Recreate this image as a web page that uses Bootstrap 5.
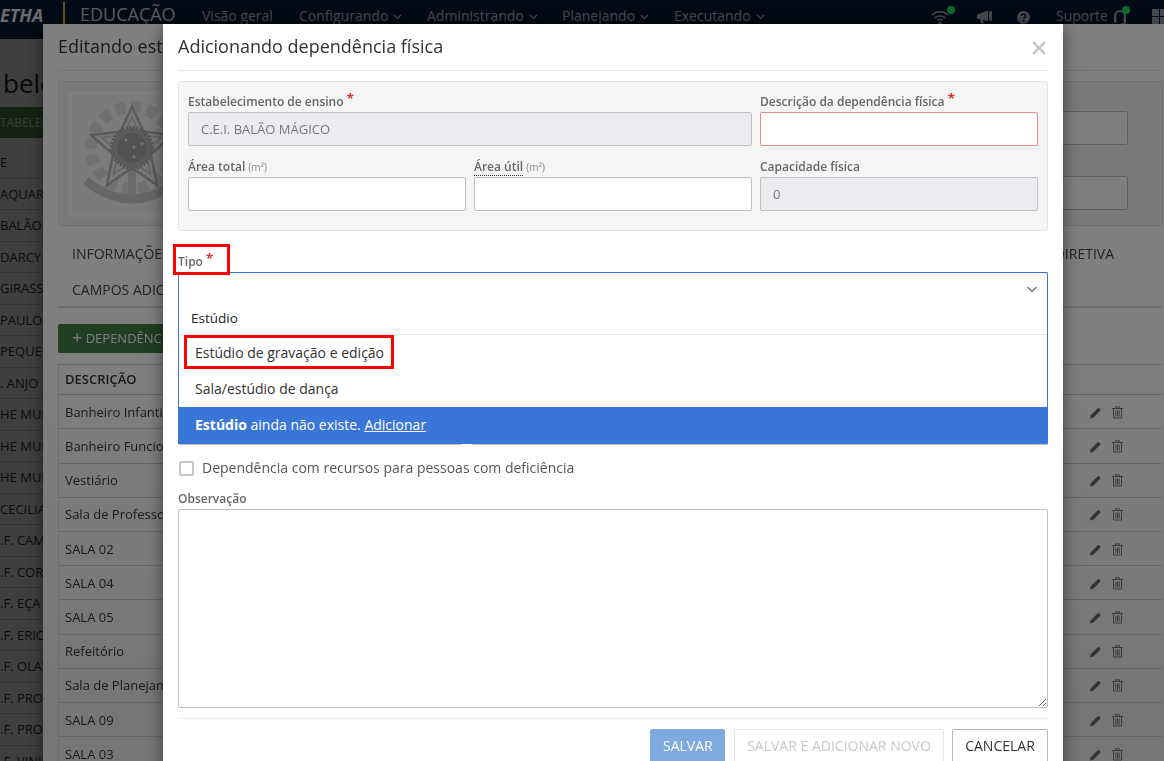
<!DOCTYPE html>
<html lang="pt-BR">
<head>
<meta charset="utf-8">
<title>Adicionando dependência física</title>
<link href="https://cdn.jsdelivr.net/npm/bootstrap@5.3.0/dist/css/bootstrap.min.css" rel="stylesheet">
<style>
html,body{height:761px;overflow:hidden;background:#fff}
body{font-family:"Open Sans","Liberation Sans",sans-serif;font-size:13px;line-height:1.4;color:#333;position:relative;width:1164px}
/* base page */
.topbar{position:relative;z-index:1055;height:39px;overflow:hidden;background:#061630;color:#8d96a2;font-size:14px;white-space:nowrap}
.topbar>*{flex:none}
.brand-txt{font-weight:700;font-style:italic;font-size:18px;color:#d0d6dc;width:63px;line-height:30px}
.brand-sep{width:2px;height:36px;background:#d8a830;margin-top:2px}
.brand-app{font-size:18px;margin-left:15px;width:122px;line-height:28px;color:#b5bbc2}
.top-item{position:relative;line-height:32px;color:#8d96a2}
.top-item svg{vertical-align:1px;margin-left:5px}
.i1{width:97px}.i2{width:128px}.i3{width:135px}.i4{width:112px}.i5{width:257px}
.top-ico{line-height:32px}
.w-wifi{width:46px}.w-horn{width:40px}.w-help{width:39px}.w-sup{width:57px}.w-head{width:39px}.w-grid{width:20px}
.dot{position:absolute;width:8px;height:8px;border-radius:50%;background:#1cd65c;left:16px;top:6px}
.w-head .dot{left:9px}
.base-page{position:relative;height:722px;overflow:hidden}
.base-title{font-size:26px;line-height:36px;margin:26px 0 0 3px;color:#222}
.base-btn{background:#4d8f4d;color:#dfe;height:31px;line-height:31px;width:70px;font-size:12px;margin-top:6px;overflow:hidden}
.base-row{height:31.5px;line-height:31px;border-bottom:1px solid #ccc;white-space:nowrap;font-size:13px}
.base-list{margin-top:9px}
/* dim layers */
.dim-a,.dim-b{position:fixed;inset:0;width:auto;height:auto;background:#000;opacity:.5}
.dim-a{z-index:1050}
.dim-b{z-index:1070}
/* modal shells */
.shell{position:absolute;top:24px;height:760px;overflow:hidden;border:0;border-radius:0;background:#fff;box-shadow:0 5px 15px rgba(0,0,0,.5);padding:0 15px}
.shell-a{left:43px;width:1135px;z-index:1060;background:linear-gradient(#fff 320px,#eaecee 700px)}
.shell-b{left:163px;width:900px;z-index:1080}
.shell-head{height:47px;border-bottom:1px solid #e9e9e9;padding:0;align-items:center}
.shell-title{font-size:18px;line-height:44px;height:46px;font-weight:400;margin:0;color:#333;white-space:nowrap}
/* first modal */
.well-a{margin-top:10px;height:145px;background:#f5f5f5;border:1px solid #e3e3e3;border-radius:3px;padding:9px 34px 0 9px}
.crest-frame{width:220px;height:126px;background:#fff;padding:4px;flex:none}
.crest-in{height:118px;background:#f6f6f6}
.crest-in svg{display:block}
.a-input{display:block;height:34px;background:#fff;border:1px solid #bbb;border-radius:2px;width:100%}
.a-input+.a-input{margin-top:31px}
.a-fields{padding-top:20px;margin-left:auto;width:500px}
.tabs-a{font-size:14px;height:82px;border-bottom:2px solid #ddd;padding:10px 14px 0;align-content:flex-start;color:#444}
.tabs-a div{height:36px;line-height:36px;white-space:nowrap}
.tab-far{margin-left:auto;margin-right:35px}
.add-btn{margin-top:16px;background:#3f7d45;color:#fff;font-size:13px;height:29px;line-height:29px;padding:0 14px;border-radius:2px;width:180px;white-space:nowrap}
.add-btn b{font-weight:400;font-size:18px;line-height:1;vertical-align:-1px}
.tbl-a{margin:11px 0 0;--bs-table-bg:transparent;--bs-table-color:#333;border-top:1px solid #ccc;border-left:1px solid #ddd;font-size:13px}
.tbl-a td,.tbl-a th{padding:7.5px 6px;line-height:18.2px;border-bottom:1px solid #ccc;border-top:0;white-space:nowrap}
.tbl-a th{font-weight:600;padding-top:5px;padding-bottom:6px}
.tbl-a .acts{width:120px;text-align:left;padding-left:47px}
.acts svg{margin-right:11px;vertical-align:-2px}
/* second modal */
.well-b{margin-top:10px;height:150px;background:#f5f5f5;border:1px solid #e3e3e3;border-radius:3px;padding:11px 9px 0}
.fld-lbl{display:block;font-size:12px;line-height:17px;height:19px;font-weight:600;color:#666;white-space:nowrap;margin:0}
.fld-lbl small{font-size:10px;font-weight:400;color:#888}
.req{color:#d9302c;font-size:13px;line-height:10px;vertical-align:3px;font-weight:700}
.dotted{border-bottom:1px dotted #333}
.fld{display:block;height:34px;border:1px solid #c0c0c0;border-radius:2px;font-size:13px;padding:0 12px;color:#777;box-shadow:none;background:#fff;min-height:0}
.fld:disabled{background:#ebecef;color:#777;opacity:1}
.fld-bad{border-color:#ec8a8a}
.rowgap{margin-bottom:12px}
.tipo-wrap{position:relative;margin-top:22px}
.tipo-box{height:34px;border:1px solid #3a76d8;border-bottom:0;border-radius:2px 2px 0 0;position:relative;background:#fff}
.tipo-box svg{position:absolute;right:10px;top:13px}
.tipo-menu{position:absolute;z-index:3;left:0;right:0;top:52px;background:#fff;border-left:1px solid #3a76d8;border-right:1px solid #3a76d8;font-size:14px;color:#333}
.typed{height:30px;line-height:27px;padding-left:12px;border-bottom:1px solid #e8e8e8;color:#222;font-size:13.5px}
.opt{height:36px;line-height:36px;padding-left:16px;color:#333}
.opt-new{background:#3a76d8;color:#fff;height:37px;line-height:36px;padding-left:17px;margin:0 -1px}
.opt-new a{color:#fff}
.mark-box{position:absolute;z-index:5;border:3px solid #f00;pointer-events:none}
.mb-a{left:-5px;top:-9px;width:57px;height:31px}
.mb-b{left:5px;top:30px;width:210px;height:34px}
.under-row{margin-top:105px;gap:8px}
.under-row .fld{flex:1}
.under-row .fld:first-child{flex:0 0 285px}
.chk-row{margin-top:15px;height:16px;font-size:14px;color:#555;gap:8px}
.chk-box{width:15px;height:15px;border:2px solid #c6c6c6;border-radius:2px;margin:0 0 0 1px;flex:none;background:#fff}
.obs-lbl{margin-top:12px;height:21px;line-height:21px}
.obs{height:199px;border:1px solid #c0c0c0;border-radius:2px;box-shadow:none;resize:both;display:block;width:100%}
.foot{margin-top:10px;border-top:1px solid #eee;padding-top:10px;gap:8px}
.foot .btn{height:34px;padding:0 12px;border-radius:2px;font-size:14px;line-height:32px}
.btn-save{background:#7faadf;border:1px solid #7faadf;color:#fff;width:75px;margin-right:1px}
.btn-next{background:#fff;border:1px solid #e6e6e6;color:#c8c8c8;width:210px}
.btn-stop{background:#fff;border:1px solid #b5b5b5;color:#333;width:96px}
.shut{position:absolute;right:17px;top:17px;display:block}
</style>
</head>
<body>

<header class="topbar d-flex">
  <div class="brand-txt">ETHA</div>
  <div class="brand-sep"></div>
  <div class="brand-app">EDUCAÇÃO</div>
  <div class="top-item i1">Visão geral</div>
  <div class="top-item i2">Configurando<svg width="9" height="6" viewBox="0 0 9 6"><path d="M1 1l3.5 3.5L8 1" fill="none" stroke="currentColor" stroke-width="1.2"/></svg></div>
  <div class="top-item i3">Administrando<svg width="9" height="6" viewBox="0 0 9 6"><path d="M1 1l3.5 3.5L8 1" fill="none" stroke="currentColor" stroke-width="1.2"/></svg></div>
  <div class="top-item i4">Planejando<svg width="9" height="6" viewBox="0 0 9 6"><path d="M1 1l3.5 3.5L8 1" fill="none" stroke="currentColor" stroke-width="1.2"/></svg></div>
  <div class="top-item i5">Executando<svg width="9" height="6" viewBox="0 0 9 6"><path d="M1 1l3.5 3.5L8 1" fill="none" stroke="currentColor" stroke-width="1.2"/></svg></div>
  <div class="top-ico w-wifi position-relative" aria-label="Conexão">
    <svg width="18" height="14" viewBox="0 0 18 14" fill="none" stroke="currentColor" stroke-width="1.4"><path d="M1 5a11.500 11.500 0 0 1 16 0M3.800 8a7.500 7.500 0 0 1 10.400 0M6.500 10.600a3.600 3.600 0 0 1 5 0"/><circle cx="9" cy="13" r=".9" fill="currentColor"/></svg>
    <span class="dot"></span>
  </div>
  <div class="top-ico w-horn" aria-label="Avisos">
    <svg width="16" height="14" viewBox="0 0 16 14" fill="currentColor"><path d="M0 4.500l11-4v11l-5-1.500.8 3.500H3.800L3 9H0zM12 2l3-1.500v11L12 10z"/></svg>
  </div>
  <div class="top-ico w-help" aria-label="Ajuda">
    <svg width="13" height="13" viewBox="0 0 13 13"><circle cx="6.500" cy="6.500" r="6.500" fill="currentColor"/><path d="M4.500 5a2 2 0 1 1 3 1.700c-.7.400-1 .7-1 1.500" fill="none" stroke="#061630" stroke-width="1.500"/><rect x="5.700" y="9.200" width="1.600" height="1.600" fill="#061630"/></svg>
  </div>
  <div class="top-item w-sup">Suporte</div>
  <div class="top-ico w-head position-relative" aria-label="Headset">
    <svg width="14" height="17" viewBox="0 0 14 17" fill="none" stroke="currentColor" stroke-width="2"><path d="M2 9V7a5 5 0 0 1 10 0v2"/><rect x="1" y="8.500" width="2.500" height="5" fill="currentColor" stroke="none"/><rect x="10.500" y="8.500" width="2.500" height="5" fill="currentColor" stroke="none"/><path d="M12 13v2H8" stroke-width="1.500"/></svg>
    <span class="dot"></span>
  </div>
  <div class="top-ico w-grid" aria-label="Menu">
    <svg width="16" height="16" viewBox="0 0 16 16" fill="currentColor"><rect width="7" height="7"/><rect x="8" width="7" height="7"/><rect y="8" width="7" height="7"/><rect x="8" y="8" width="7" height="7"/></svg>
  </div>
</header>

<main class="base-page">
  <div class="base-title">belecimentos</div>
  <div class="base-btn">TABELECIMENTO</div>
  <div class="base-list">
    <div class="base-row">E</div>
    <div class="base-row">AQUARELA</div>
    <div class="base-row">BALÃO MÁGICO</div>
    <div class="base-row">DARCY</div>
    <div class="base-row">GIRASSOL</div>
    <div class="base-row">PAULO</div>
    <div class="base-row">PEQUENO</div>
    <div class="base-row">. ANJO</div>
    <div class="base-row">HE MUNICIPAL</div>
    <div class="base-row">HE MUNICIPAL</div>
    <div class="base-row">HE MUNICIPAL</div>
    <div class="base-row">CECILIA</div>
    <div class="base-row">.F. CAMPOS</div>
    <div class="base-row">.F. CORA</div>
    <div class="base-row">.F. EÇA</div>
    <div class="base-row">.F. ERICO</div>
    <div class="base-row">.F. OLAVO</div>
    <div class="base-row">.F. PROF</div>
    <div class="base-row">.F. PROF</div>
    <div class="base-row">.F. VINICIUS</div>
  </div>
</main>

<div class="modal-backdrop show dim-a"></div>

<section class="modal-content shell shell-a">
  <div class="modal-header shell-head">
    <h2 class="shell-title">Editando estabelecimento de ensino</h2>
  </div>
  <svg class="shut" width="14" height="14" viewBox="0 0 14 14" stroke="#ccc" stroke-width="2.400" style="right:0"><path d="M1 1l12 12M13 1L1 13"/></svg>
  <div class="well-a d-flex">
    <div class="crest-frame">
      <div class="crest-in">
        <svg width="120" height="118" viewBox="0 0 120 118" aria-label="Brasão">
          <circle cx="60" cy="53" r="41" fill="none" stroke="#e0e0e0" stroke-width="12" stroke-dasharray="10 6"/>
          <path d="M14 86q46 36 92 0" fill="none" stroke="#cdcdcd" stroke-width="9"/>
          <rect x="56" y="72" width="8" height="30" fill="#d4d4d4"/>
          <path d="M60 12l11.800 24.800L101 40 79 59.200 85 90 60 73 35 90l6-30.800L19 40l29.200-3.200z" fill="#f0f0f0" stroke="#b4b4b4" stroke-width="2.500"/>
          <path d="M60 22l8.500 18 21 2.500L74 57l4.500 22L60 67 41.500 79 46 57 30 42.500 51.500 40z" fill="none" stroke="#c8c8c8" stroke-width="1.500"/>
          <circle cx="60" cy="53" r="20" fill="#b8b8b8" stroke="#ababab" stroke-width="4" stroke-dasharray="2 1.500"/>
          <circle cx="60" cy="53" r="15" fill="#a6a6a6"/>
          <circle cx="54" cy="45" r="1.400" fill="#eee"/><circle cx="62" cy="52" r="1.400" fill="#eee"/><circle cx="70" cy="49" r="1.400" fill="#eee"/><circle cx="62" cy="62" r="1.400" fill="#eee"/>
        </svg>
      </div>
    </div>
    <div class="a-fields">
      <span class="a-input"></span>
      <span class="a-input"></span>
    </div>
  </div>
  <div class="tabs-a d-flex flex-wrap">
    <div>INFORMAÇÕES GERAIS</div>
    <div class="tab-far">EQUIPE DIRETIVA</div>
    <div class="w-100">CAMPOS ADICIONAIS</div>
  </div>
  <div class="add-btn"><b>+</b> DEPENDÊNCIA FÍSICA</div>
  <table class="table tbl-a">
    <thead><tr><th>DESCRIÇÃO</th><th class="acts"></th></tr></thead>
    <tbody id="rows"></tbody>
  </table>
</section>

<div class="modal-backdrop show dim-b"></div>

<section class="modal-content shell shell-b">
  <div class="modal-header shell-head">
    <h1 class="shell-title">Adicionando dependência física</h1>
  </div>
  <svg class="shut" width="14" height="14" viewBox="0 0 14 14" stroke="#c4c4c4" stroke-width="2.400"><path d="M1 1l12 12M13 1L1 13"/></svg>

  <div class="well-b">
    <div class="row gx-2 rowgap">
      <div class="col-8">
        <label class="fld-lbl">Estabelecimento de ensino <span class="req">*</span></label>
        <input class="form-control fld" disabled value="C.E.I. BALÃO MÁGICO">
      </div>
      <div class="col-4">
        <label class="fld-lbl">Descrição da dependência física <span class="req">*</span></label>
        <input class="form-control fld fld-bad">
      </div>
    </div>
    <div class="row gx-2">
      <div class="col-4">
        <label class="fld-lbl">Área total <small>(m²)</small></label>
        <input class="form-control fld">
      </div>
      <div class="col-4">
        <label class="fld-lbl"><span class="dotted">Área útil</span> <small>(m²)</small></label>
        <input class="form-control fld">
      </div>
      <div class="col-4">
        <label class="fld-lbl">Capacidade física</label>
        <input class="form-control fld" disabled value="0">
      </div>
    </div>
  </div>

  <div class="tipo-wrap">
    <span class="mark-box mb-a"></span>
    <label class="fld-lbl">Tipo <span class="req">*</span></label>
    <div class="tipo-box">
      <svg width="10" height="7" viewBox="0 0 10 7"><path d="M.5 1l4.500 4.500L9.500 1" fill="none" stroke="#666" stroke-width="1.100"/></svg>
    </div>
    <div class="tipo-menu">
      <span class="mark-box mb-b"></span>
      <div class="typed">Estúdio</div>
      <div class="opt">Estúdio de gravação e edição</div>
      <div class="opt">Sala/estúdio de dança</div>
      <div class="opt-new"><strong>Estúdio</strong> ainda não existe. <a href="#">Adicionar</a></div>
    </div>
    <div class="d-flex under-row">
      <input class="form-control fld"><input class="form-control fld">
    </div>
  </div>

  <div class="d-flex align-items-center chk-row">
    <span class="chk-box"></span>
    <span>Dependência com recursos para pessoas com deficiência</span>
  </div>
  <label class="fld-lbl obs-lbl">Observação</label>
  <textarea class="form-control obs"></textarea>
  <div class="d-flex justify-content-end foot">
    <button class="btn btn-save" type="button">SALVAR</button>
    <button class="btn btn-next" type="button">SALVAR E ADICIONAR NOVO</button>
    <button class="btn btn-stop" type="button">CANCELAR</button>
  </div>
</section>

<script>
var names=["Banheiro Infantil","Banheiro Funcionários","Vestiário","Sala de Professores","SALA 02","SALA 04","SALA 05","Refeitório","Sala de Planejamento","SALA 09","SALA 03"];
var pen='<svg width="11" height="12" viewBox="0 0 12 12" fill="#666"><path d="M0 12l.8-3.500L8.500.8a1 1 0 0 1 1.400 0l1.300 1.300a1 1 0 0 1 0 1.400L3.500 11.200z"/></svg>';
var bin='<svg width="11" height="13" viewBox="0 0 11 13" fill="none" stroke="#777" stroke-width="1"><path d="M0 2.500h11M3.500 2.500V.8h4v1.700M1.500 2.500v9.500h8V2.500M3.800 4.500v6M5.500 4.500v6M7.200 4.500v6"/></svg>';
document.getElementById('rows').innerHTML=names.map(function(n){return '<tr><td>'+n+'</td><td class="acts">'+pen+bin+'</td></tr>';}).join('');
</script>
<script src="https://cdn.jsdelivr.net/npm/bootstrap@5.3.0/dist/js/bootstrap.bundle.min.js"></script>
</body>
</html>
